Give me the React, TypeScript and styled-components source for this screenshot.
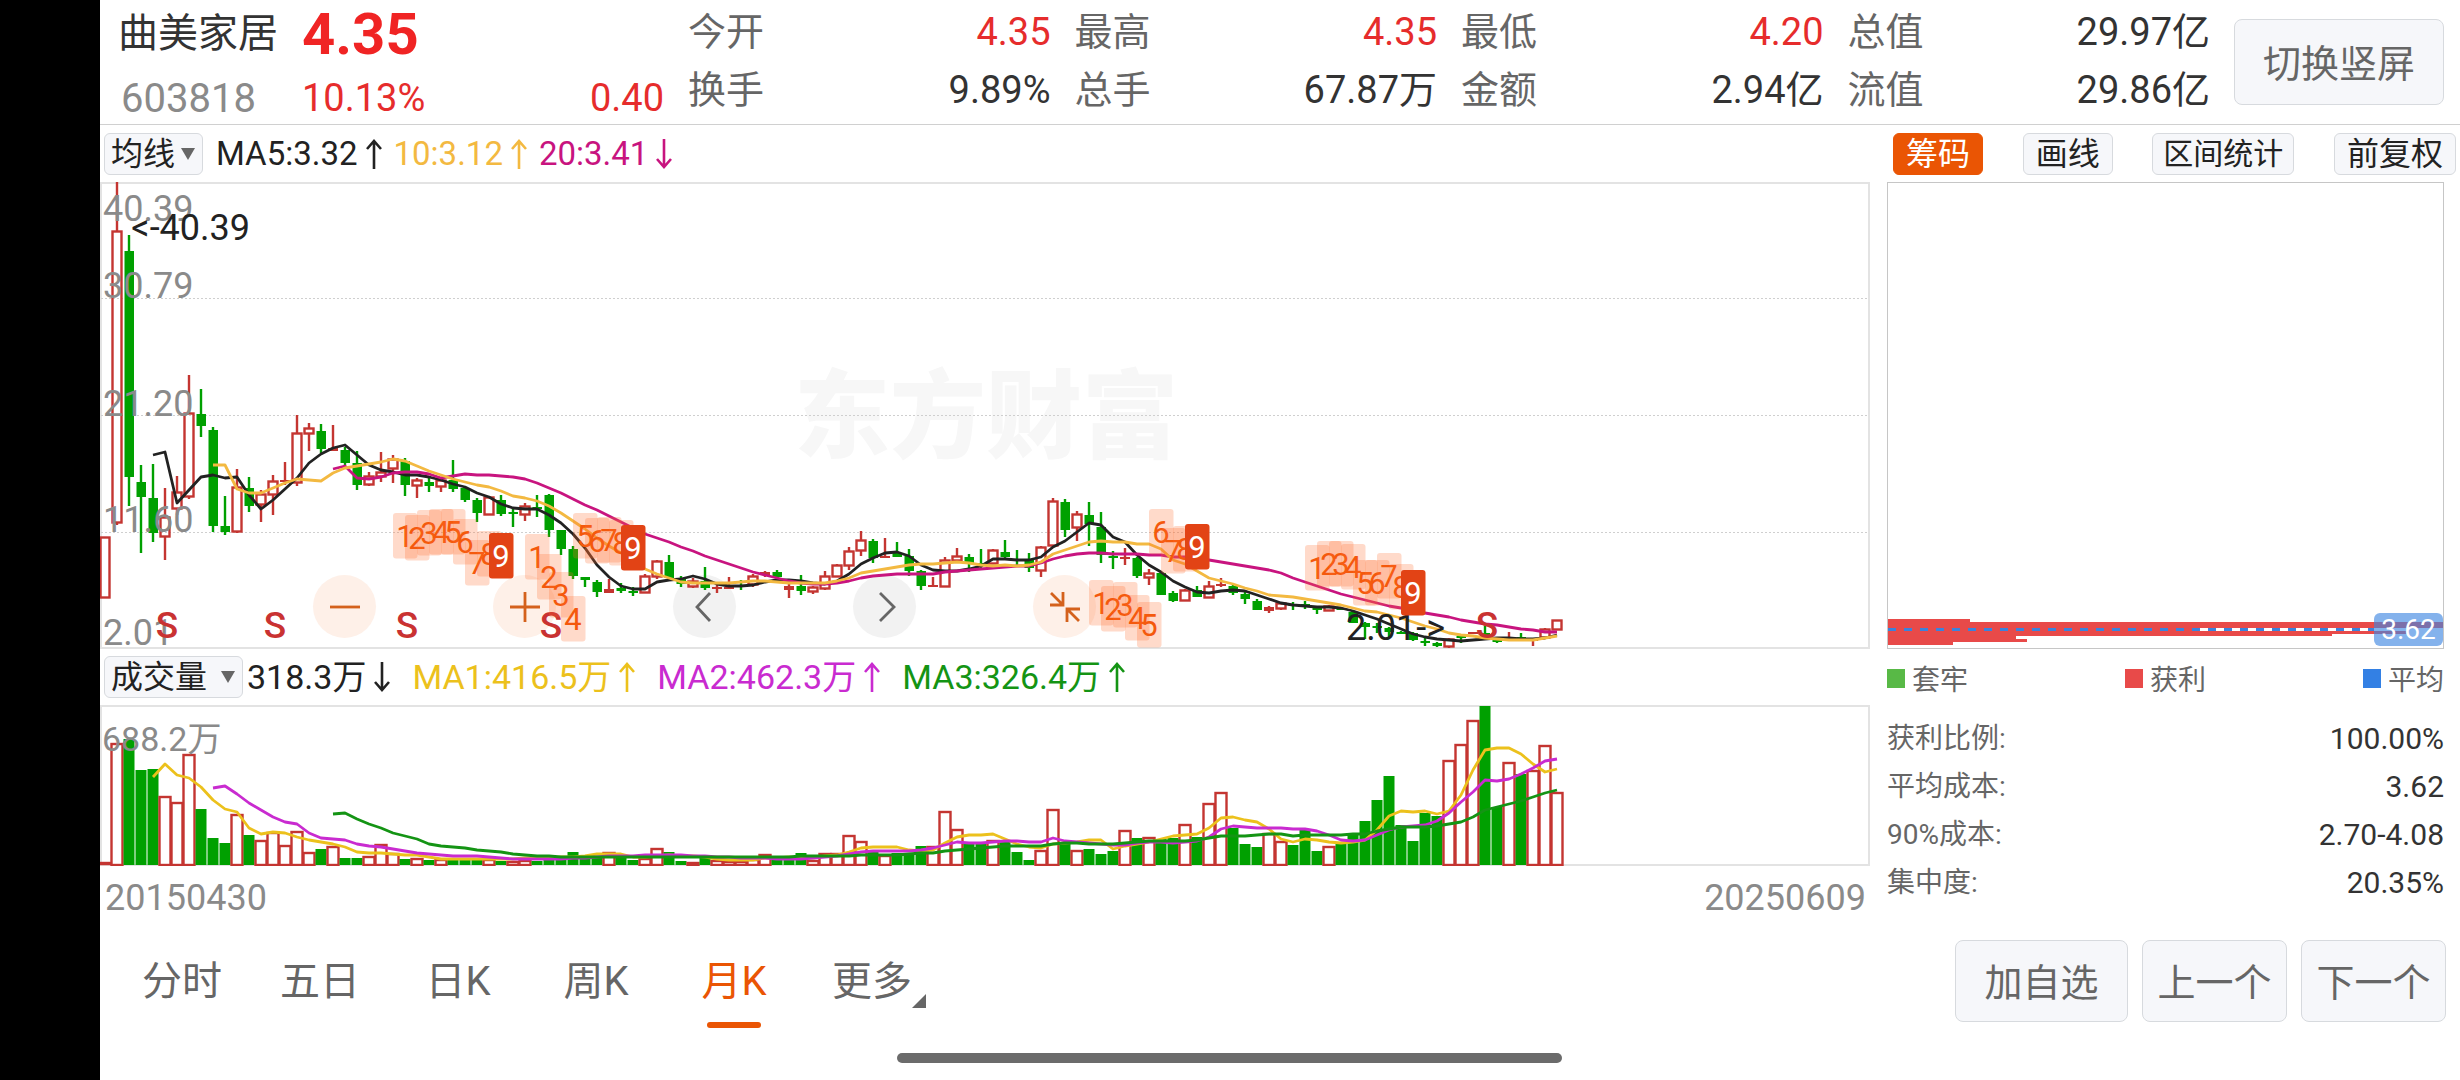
import React, { useState } from 'react';
import styled, { createGlobalStyle, css } from 'styled-components';

const color = {
  ink: '#222222',
  text: '#333333',
  label: '#666666',
  muted: '#8a8a8a',
  up: '#e62c2c',
  candleUp: '#c43531',
  candleDown: '#00a000',
  accent: '#ea5504',
  amber: '#f3b941',
  magenta: '#c8147f',
  purple: '#c92bd0',
  gold: '#ecc11c',
  green: '#149414',
  line: '#e3e3e3',
  chip: '#f6f7fa',
  chipLine: '#d7dade',
  profit: '#e84a49',
};

const GlobalStyle = createGlobalStyle`
  * { box-sizing: border-box; }
  body {
    margin: 0;
    background: #fff;
    color: ${color.text};
    font-family: Roboto, "Noto Sans CJK SC", sans-serif;
  }
  button, select { font: inherit; color: inherit; margin: 0; cursor: pointer; }
`;

/* ---------- series data, in chart canvas units ---------- */

const STEP = 12;
const FIRST = 105;
const xAt = (i: number) => FIRST + i * STEP;

type Candle = { up: boolean; high: number; top: number; bottom: number; low: number };

const candles: Candle[] = `
r537,537,598,598 r182,231,523,525 g235,251,477,506 g465,482,497,553 g464,498,533,542
r488,517,537,560 r476,492,509,515 r375,413,497,499 g389,414,426,437 g427,430,526,532
g496,526,532,535 r469,487,532,533 g477,488,506,512 r490,494,505,522 r475,481,495,515
r462,480,482,485 r415,433,483,486 r423,428,434,451 g424,431,449,453 r425,448,451,451
g447,450,463,465 g451,463,485,490 r472,476,485,486 r452,472,477,482 r455,459,469,483
g458,461,485,496 r478,480,486,498 g477,482,486,492 r478,480,487,492 g460,480,489,492
g487,488,500,502 g498,500,513,522 r497,497,515,515 g495,500,514,516 g507,512,514,527
r503,506,515,521 g495,507,508,517 g494,495,530,537 g530,530,549,555 g546,549,576,579
g577,577,580,587 g580,582,592,597 r579,589,593,593 g583,588,591,593 g587,591,592,596
r574,576,593,593 r560,561,577,579 g555,562,578,579 g576,579,584,587 r578,581,587,588
g567,581,588,590 r583,587,589,593 r577,587,589,589 g580,585,587,590 r574,576,585,587
r571,572,575,577 g570,572,577,579 r584,586,590,598 g575,586,591,595 r586,587,592,594
r571,576,589,590 r564,565,577,577 r547,551,566,570 r531,540,551,556 g539,541,558,563
r538,556,558,558 g542,553,557,557 g549,556,571,576 g570,571,586,590 r577,585,587,587
r557,560,587,587 r548,556,561,561 g554,557,564,572 g549,563,565,568 r549,550,564,564
g540,552,557,559 g550,559,560,565 g553,560,568,572 r546,547,571,577 r498,501,546,547
g499,502,530,537 r511,514,528,541 g502,515,524,546 g512,527,555,563 g551,556,558,569
r548,557,559,565 g557,558,576,578 r569,573,578,585 g572,573,595,595 g591,593,601,602
r589,590,601,601 g586,590,597,597 r581,586,598,598 r578,584,586,587 g585,586,593,595
g592,594,599,604 g599,601,610,610 r606,607,611,613 r603,603,609,610 g602,604,606,610
g601,604,606,609 g607,608,610,614 r605,606,611,611 g607,608,609,610 g611,612,623,623
g622,623,627,639 g623,626,628,633 g627,628,632,637 g631,632,634,634 g632,633,640,641
g638,641,642,646 g642,643,646,647 r638,639,647,648 g634,636,638,643 r632,632,634,634
g626,633,636,637 g639,640,642,643 r632,639,640,640 g633,637,639,640 r639,639,641,646
r628,629,638,638 r620,620,630,630`
  .trim()
  .split(/\s+/)
  .map((entry) => {
    const [high, top, bottom, low] = entry.slice(1).split(',').map(Number);
    return { up: entry[0] === 'r', high, top, bottom, low };
  });

const volumes = `
r864 r743 g739 g770 g769 r796 r802 r754 g809 g838 g843 r814 g835 r840 r832 r845 r831 r852 g849 r846
g858 g858 r856 r844 r853 g859 r858 g860 r859 g859 g859 g859 r859 g861 r861 r860 g861 g860 g859 g852
g858 g858 r852 g858 g860 r858 r848 g852 g861 r862 g858 r860 r861 r861 r859 r854 g858 g860 g853 r860
r853 r853 r835 r841 g850 r855 g853 g853 g846 r846 r811 r829 g843 g843 r840 g842 g852 g860 r850 r809
g842 r850 g849 g854 g851 r830 g838 r837 g839 g838 r824 g837 r803 r792 g828 g844 g847 r833 r841 g845
g829 g851 r846 g844 g835 g821 g800 g776 g825 g841 g813 g816 r760 r744 r720 g706 g807 r762 g774 r770
r745 r792`
  .trim()
  .split(/\s+/)
  .map((entry) => ({ up: entry[0] === 'r', top: Number(entry.slice(1)) }));

type Series = { start: number; stroke: string; values: number[] };

const priceAverages: Series[] = [
  {
    start: 4,
    stroke: '#222222',
    values: [
      455, 452, 503, 490, 477, 475, 478, 477, 495, 509, 500, 489, 478, 463, 454, 448, 445, 455, 465, 470, 472, 475,
      475, 477, 480, 484, 487, 493, 497, 504, 508, 509, 509, 515, 523, 534, 548, 565, 577, 586, 589, 589, 582, 580,
      579, 576, 579, 584, 586, 586, 585, 582, 580, 580, 581, 583, 584, 581, 574, 564, 558, 553, 552, 556, 565, 570,
      571, 571, 569, 566, 559, 559, 560, 560, 557, 547, 541, 532, 523, 525, 537, 542, 555, 565, 572, 581, 587, 592,
      593, 591, 590, 591, 595, 599, 603, 605, 606, 607, 607, 608, 611, 615, 619, 624, 629, 634, 637, 639, 640, 641,
      640, 639, 638, 638, 639, 639, 638, 635,
    ],
  },
  {
    start: 19,
    stroke: '#c8147f',
    values: [
      469, 466, 478, 479, 477, 473, 472, 472, 474, 478, 476, 474, 475, 475, 476, 477, 479, 483, 488, 493, 499, 505,
      510, 516, 522, 528, 534, 538, 542, 547, 551, 556, 560, 564, 568, 572, 575, 578, 581, 583, 584, 584, 583, 581,
      578, 576, 575, 574, 574, 574, 574, 572, 571, 570, 569, 568, 567, 566, 566, 563, 559, 556, 554, 553, 553, 554,
      554, 554, 555, 555, 557, 557, 558, 560, 562, 564, 566, 568, 570, 573, 578, 582, 586, 590, 594, 597, 600, 603,
      606, 608, 610, 613, 615, 617, 620, 622, 624, 625, 627, 629, 630, 632, 632,
    ],
  },
  {
    start: 9,
    stroke: '#f3b941',
    values: [
      465, 465, 489, 493, 493, 488, 483, 479, 480, 481, 473, 468, 466, 464, 462, 459, 461, 466, 471, 475, 479, 482,
      485, 487, 491, 496, 498, 501, 506, 513, 521, 529, 538, 546, 553, 562, 569, 574, 578, 582, 583, 583, 583, 583,
      582, 581, 581, 582, 583, 583, 583, 583, 581, 578, 573, 571, 569, 567, 565, 564, 564, 563, 562, 563, 565, 566,
      565, 566, 565, 562, 554, 550, 546, 542, 541, 542, 542, 544, 544, 549, 560, 564, 571, 578, 581, 584, 588, 591,
      595, 596, 597, 599, 601, 603, 605, 608, 611, 612, 615, 618, 622, 626, 629, 633, 635, 636, 638, 639, 640, 640,
      640, 638, 636,
    ],
  },
];

const volumeAverages: Series[] = [
  {
    start: 4,
    stroke: '#ecc11c',
    values: [
      777, 764, 775, 778, 787, 800, 809, 812, 828, 834, 832, 833, 837, 840, 842, 844, 847, 852, 853, 853, 854, 855,
      855, 857, 859, 859, 859, 859, 859, 859, 859, 858, 858, 858, 857, 857, 856, 854, 854, 854, 857, 857, 856, 855,
      856, 856, 857, 859, 860, 860, 860, 858, 858, 857, 858, 858, 856, 855, 852, 848, 847, 847, 847, 850, 851, 850,
      843, 837, 835, 835, 834, 839, 844, 847, 848, 844, 843, 842, 840, 840, 849, 846, 844, 842, 839, 836, 835, 834,
      828, 818, 817, 820, 822, 829, 839, 842, 839, 840, 842, 843, 842, 840, 830, 816, 811, 812, 811, 814, 811, 795,
      770, 750, 748, 748, 754, 764, 772, 769,
    ],
  },
  {
    start: 9,
    stroke: '#c92bd0',
    values: [
      788, 786, 794, 803, 810, 817, 822, 824, 833, 838, 839, 840, 844, 846, 847, 849, 851, 853, 854, 855, 856, 856,
      856, 857, 858, 859, 859, 859, 859, 859, 858, 858, 857, 856, 856, 856, 855, 855, 855, 855, 856, 856, 857, 857,
      858, 858, 858, 859, 859, 859, 858, 857, 856, 854, 852, 851, 851, 851, 851, 850, 848, 845, 842, 843, 843, 842,
      841, 841, 842, 842, 838, 841, 842, 843, 844, 845, 845, 843, 842, 842, 843, 842, 841, 837, 829, 826, 827, 828,
      828, 828, 829, 829, 831, 835, 840, 841, 840, 835, 830, 827, 826, 825, 821, 813, 802, 792, 780, 781, 779, 774,
      768, 761, 759,
    ],
  },
  {
    start: 19,
    stroke: '#149414',
    values: [
      814, 813, 819, 824, 828, 833, 836, 839, 844, 846, 847, 848, 850, 851, 852, 854, 855, 856, 856, 857, 857, 857,
      857, 857, 857, 857, 857, 857, 857, 857, 857, 857, 857, 857, 857, 857, 857, 857, 857, 856, 856, 856, 856, 856,
      855, 855, 855, 855, 854, 853, 853, 851, 850, 849, 848, 847, 846, 846, 846, 846, 844, 843, 843, 844, 844, 844,
      843, 842, 841, 841, 841, 841, 840, 838, 836, 836, 836, 835, 834, 834, 836, 835, 835, 835, 835, 834, 834, 831,
      829, 827, 827, 827, 826, 824, 822, 817, 810, 807, 804, 801, 797, 793, 790,
    ],
  },
];

const toPoints = (s: Series) => s.values.map((v, k) => `${xAt(s.start + k)},${v}`).join(' ');

/* Sequential count runs: index of the first candle and the tag tops. */
const runs: { start: number; first: number; tops: number[] }[] = [
  { start: 25, first: 1, tops: [513, 515, 510, 509, 509, 519, 540, 531, 533] },
  { start: 36, first: 1, tops: [534, 554, 572, 596, 513, 518, 517, 520, 525] },
  { start: 83, first: 1, tops: [580, 586, 582, 595, 602, 509, 528, 526, 524] },
  { start: 101, first: 1, tops: [545, 541, 541, 544, 560, 560, 553, 564, 570] },
];

const sellMarks = [167, 275, 407, 551, 1487];

/* ---------- shell ---------- */

const Page = styled.div`
  position: relative;
  display: flex;
  min-height: 100vh;
  background: #fff;
`;

const CameraStrip = styled.div`
  flex: 0 0 100px;
  background: #000;
`;

const Screen = styled.main`
  flex: 1;
  min-width: 0;
  display: flex;
  flex-direction: column;
`;

const HomeIndicator = styled.div`
  position: absolute;
  left: 50%;
  bottom: 17px;
  width: 665px;
  height: 10px;
  margin-left: -333px;
  border-radius: 5px;
  background: #6b6b6b;
`;

const softButton = css`
  border: 1px solid ${color.chipLine};
  background: ${color.chip};
  padding: 0;
`;

/* ---------- quote header ---------- */

const Header = styled.header`
  display: flex;
  gap: 24px;
  height: 125px;
  padding: 3px 16px 0 18px;
  border-bottom: 1px solid #d0d0d0;
`;

const Identity = styled.div`
  flex: 0 0 546px;
  display: grid;
  grid-template-columns: 184px 1fr auto;
  grid-template-rows: 62px 66px;
  align-items: center;
  white-space: nowrap;
`;

const StockName = styled.h1`
  margin: 0;
  font-size: 40px;
  font-weight: 400;
  line-height: 60px;
`;

const Price = styled.strong`
  grid-column: span 2;
  color: #f02424;
  font-size: 58px;
  font-weight: 700;
  line-height: 60px;
`;

const StockCode = styled.span`
  padding-left: 3px;
  color: ${color.muted};
  font-size: 40px;
`;

const Change = styled.span`
  color: ${color.up};
  font-size: 38px;
`;

const Quotes = styled.dl`
  flex: 1;
  display: grid;
  grid-template-columns: repeat(4, 1fr);
  grid-template-rows: 58px 58px;
  column-gap: 24px;
  margin: 0;
`;

const Quote = styled.div`
  display: flex;
  justify-content: space-between;
  align-items: center;
  white-space: nowrap;
  line-height: 58px;
`;

const QuoteLabel = styled.dt`
  color: ${color.label};
  font-size: 38px;
`;

const QuoteValue = styled.dd<{ $up?: boolean }>`
  margin: 0;
  color: ${(p) => (p.$up ? color.up : color.text)};
  font-size: 38px;
`;

const RotateButton = styled.button`
  ${softButton}
  flex: 0 0 210px;
  height: 86px;
  margin-top: 16px;
  padding-bottom: 4px;
  border-radius: 8px;
  color: ${color.label};
  font-size: 38px;
`;

/* ---------- body ---------- */

const Body = styled.div`
  display: grid;
  grid-template-columns: minmax(0, 1fr) 573px;
  column-gap: 17px;
`;

const Column = styled.section`
  min-width: 0;
  display: flex;
  flex-direction: column;
`;

const Legend = styled.div<{ $volume?: boolean }>`
  display: flex;
  align-items: center;
  gap: ${(p) => (p.$volume ? 22 : 12)}px;
  height: ${(p) => (p.$volume ? 56 : 57)}px;
  padding-left: 4px;
  font-size: ${(p) => (p.$volume ? 34 : 33)}px;
  line-height: 40px;
  white-space: nowrap;
`;

const Picker = styled.label<{ $width: number }>`
  position: relative;
  display: block;
  width: ${(p) => p.$width}px;
  margin-right: ${(p) => (p.$width > 100 ? -18 : 1)}px;
`;

const PickerSelect = styled.select`
  ${softButton}
  appearance: none;
  display: block;
  width: 100%;
  height: 42px;
  padding: 0 0 0 6px;
  border-radius: 6px;
  color: ${color.ink};
  font-size: 32px;
  line-height: 40px;
`;

const PickerArrow = styled.svg`
  position: absolute;
  right: 8px;
  top: 15px;
  width: 14px;
  height: 12px;
  pointer-events: none;
`;

const Indicator = styled.span<{ $color: string }>`
  display: inline-flex;
  align-items: center;
  gap: 8px;
  color: ${(p) => p.$color};
`;

const ArrowIcon = styled.svg<{ $down?: boolean }>`
  width: 16px;
  height: 30px;
  fill: none;
  stroke: currentColor;
  stroke-width: 2.6;
  rotate: ${(p) => (p.$down ? '180deg' : '0deg')};
`;

const ChartFrame = styled.div<{ $height: number }>`
  position: relative;
  height: ${(p) => p.$height}px;
  box-shadow: inset 0 0 0 2px ${color.line};
`;

const Canvas = styled.svg`
  position: relative;
  display: block;
  width: 100%;
  height: 100%;
  pointer-events: none;

  .axis { fill: ${color.muted}; font-size: 36px; }
  .volume-axis { fill: ${color.muted}; font-size: 34px; }
  .mark { fill: ${color.ink}; font-size: 36px; }
  .sell { fill: #c93232; font-size: 37px; font-weight: 500; text-anchor: middle; }
  .count { font-size: 31px; text-anchor: middle; }
  .brand { fill: #f7f7f7; font-size: 96px; font-weight: 900; font-family: "Noto Sans CJK SC", sans-serif; }
  .grid { stroke: #cfcfcf; stroke-width: 1; stroke-dasharray: 2 2; }
  .average { fill: none; stroke-width: 2.8; stroke-linejoin: round; }
`;

const ChartTools = styled.div`
  position: absolute;
  left: 213px;
  bottom: 11px;
  display: flex;
  gap: 117px;
`;

const RoundButton = styled.button<{ $neutral?: boolean }>`
  display: grid;
  place-items: center;
  width: 63px;
  height: 63px;
  padding: 0;
  border: 0;
  border-radius: 50%;
  background: ${(p) => (p.$neutral ? '#f2f2f2' : '#fef0e8')};
  color: ${(p) => (p.$neutral ? '#666666' : '#d4611c')};

  svg { width: 32px; height: 32px; fill: none; stroke: currentColor; stroke-width: 2.8; }
`;

const DateRow = styled.div`
  display: flex;
  justify-content: space-between;
  padding: 0 4px 0 5px;
  color: ${color.muted};
  font-size: 36px;
  line-height: 64px;
`;

/* ---------- cost distribution panel ---------- */

const ChipRow = styled.div`
  display: flex;
  align-items: center;
  justify-content: space-between;
  height: 57px;
  padding: 0 4px 0 6px;
`;

const Chip = styled.button<{ $active?: boolean; $tight?: boolean }>`
  ${softButton}
  height: 42px;
  padding: 0 ${(p) => (p.$tight ? 10 : 12)}px;
  border-radius: 6px;
  color: ${color.ink};
  font-size: ${(p) => (p.$tight ? 30 : 32)}px;
  line-height: 40px;
  white-space: nowrap;
  ${(p) => p.$active && css`
    border-color: ${color.accent};
    background: ${color.accent};
    color: #fff;
  `}
`;

const CostFrame = styled.div`
  position: relative;
  height: 467px;
  margin-right: 16px;
  border: 1px solid #c6c6c6;
`;

const CostCanvas = styled.svg`
  display: block;
  width: 100%;
  height: 100%;
`;

const CostBadge = styled.span`
  position: absolute;
  right: 0;
  bottom: 2px;
  width: 69px;
  border-radius: 6px;
  background: rgba(62, 134, 226, 0.64);
  color: #fff;
  font-size: 28px;
  line-height: 33px;
  text-align: center;
`;

const CostKey = styled.ul`
  display: flex;
  align-items: center;
  justify-content: space-between;
  height: 58px;
  margin: 0 16px 0 0;
  padding: 0;
  list-style: none;
  color: ${color.label};
  font-size: 28px;
`;

const KeyItem = styled.li<{ $color: string }>`
  display: flex;
  align-items: center;
  gap: 7px;

  &::before {
    content: '';
    width: 18px;
    height: 19px;
    background: ${(p) => p.$color};
  }
`;

const Stats = styled.dl`
  margin: 8px 16px 0 0;
`;

const Stat = styled.div`
  display: flex;
  justify-content: space-between;
  font-size: 28px;
  line-height: 48px;

  dt { color: ${color.label}; }
  dd { margin: 0; font-size: 30px; }
`;

/* ---------- footer ---------- */

const Footer = styled.footer`
  display: flex;
  justify-content: space-between;
  padding: 0 14px;
`;

const Tabs = styled.nav`
  display: flex;
`;

const Tab = styled.button<{ $active: boolean }>`
  position: relative;
  width: 138px;
  height: 102px;
  padding: 0 2px 6px 0;
  border: 0;
  background: none;
  color: ${(p) => (p.$active ? color.accent : color.label)};
  font-size: 40px;
  ${(p) => p.$active && css`
    &::after {
      content: '';
      position: absolute;
      left: 41px;
      bottom: 4px;
      width: 54px;
      height: 6px;
      border-radius: 3px;
      background: ${color.accent};
    }
  `}
`;

const MoreCorner = styled.svg`
  position: absolute;
  right: 16px;
  bottom: 24px;
  width: 14px;
  height: 14px;
  fill: ${color.label};
`;

const Actions = styled.div`
  display: flex;
  gap: 14px;
  padding-top: 10px;
`;

const ActionButton = styled.button<{ $wide?: boolean }>`
  ${softButton}
  width: ${(p) => (p.$wide ? 173 : 145)}px;
  height: 82px;
  padding-bottom: 4px;
  border-radius: 8px;
  color: ${color.label};
  font-size: 38px;
`;

/* ---------- pieces ---------- */

const Arrow = ({ down }: { down?: boolean }) => (
  <ArrowIcon $down={down} viewBox="0 0 16 30" aria-hidden="true">
    <path d="M8 30V2M1 10L8 2l7 8" />
  </ArrowIcon>
);

const Dropdown = ({ label, width, options }: { label: string; width: number; options: string[] }) => (
  <Picker $width={width}>
    <PickerSelect aria-label={label}>
      {options.map((o) => (
        <option key={o}>{o}</option>
      ))}
    </PickerSelect>
    <PickerArrow viewBox="0 0 14 12" aria-hidden="true">
      <path d="M0 0h14L7 12z" fill="#666" />
    </PickerArrow>
  </Picker>
);

const Averages = ({ series }: { series: Series[] }) => (
  <>
    {series.map((s) => (
      <polyline key={s.stroke} className="average" stroke={s.stroke} points={toPoints(s)} />
    ))}
  </>
);

const CandleShape = ({ candle, x }: { candle: Candle; x: number }) => {
  const { up, high, top, bottom, low } = candle;
  const height = Math.max(bottom - top, 2);
  if (!up) {
    return (
      <g fill={color.candleDown}>
        <rect x={x - 1.2} y={high} width={2.4} height={low - high} />
        <rect x={x - 4.5} y={top} width={9.5} height={height} />
      </g>
    );
  }
  return (
    <g fill={color.candleUp}>
      <rect x={x - 1.2} y={high} width={2.4} height={Math.max(top - high, 0)} />
      <rect x={x - 1.2} y={bottom} width={2.4} height={Math.max(low - bottom, 0)} />
      {height < 5 ? (
        <rect x={x - 5} y={top} width={10} height={height} />
      ) : (
        <rect x={x - 4.5} y={top + 0.5} width={9} height={height - 1} fill="none" stroke={color.candleUp} strokeWidth={2.4} />
      )}
    </g>
  );
};

const CountTags = () => (
  <>
    {runs.flatMap((run) =>
      run.tops.map((top, k) => {
        const x = xAt(run.start + k);
        const n = run.first + k;
        const last = n === 9;
        return (
          <g key={`${run.start}-${k}`}>
            <rect
              x={x - 12}
              y={top}
              width={24.5}
              height={45.5}
              rx={3}
              fill={last ? '#e24315' : '#ff6a2a'}
              fillOpacity={last ? 1 : 0.25}
            />
            <text className="count" x={x} y={top + 34} fill={last ? '#fff' : '#f4590c'}>
              {n}
            </text>
          </g>
        );
      }),
    )}
  </>
);

const PriceChart = () => (
  <ChartFrame $height={467}>
    <ChartTools>
      <RoundButton aria-label="缩小">
        <svg viewBox="0 0 32 32"><path d="M1 16h30" /></svg>
      </RoundButton>
      <RoundButton aria-label="放大">
        <svg viewBox="0 0 32 32"><path d="M1 16h30M16 1v30" /></svg>
      </RoundButton>
      <RoundButton $neutral aria-label="左移">
        <svg viewBox="0 0 32 32"><path d="M21 2L8 16l13 14" /></svg>
      </RoundButton>
      <RoundButton $neutral aria-label="右移">
        <svg viewBox="0 0 32 32"><path d="M11 2l14 14-14 14" /></svg>
      </RoundButton>
      <RoundButton aria-label="收起">
        <svg viewBox="0 0 32 32">
          <path d="M1 14h13V1M2 2l12 12M18 31V18h13M18 18l12 12" />
        </svg>
      </RoundButton>
    </ChartTools>
    <Canvas viewBox="100 182 1770 467" preserveAspectRatio="xMinYMid meet">
      <text className="brand" x={794} y={450}>东方财富</text>
      {[298.5, 415.5, 532.5].map((y) => (
        <line key={y} className="grid" x1={101} x2={1868} y1={y} y2={y} />
      ))}
      {candles.map((c, i) => (
        <CandleShape key={i} candle={c} x={xAt(i)} />
      ))}
      <Averages series={priceAverages} />
      <text className="axis" x={103} y={221}>40.39</text>
      <text className="axis" x={103} y={298}>30.79</text>
      <text className="axis" x={103} y={416}>21.20</text>
      <text className="axis" x={103} y={532}>11.60</text>
      <text className="axis" x={103} y={645}>2.01</text>
      <text className="mark" x={250} y={240} textAnchor="end">&lt;-40.39</text>
      <text className="mark" x={1346} y={640}>2.01-&gt;</text>
      {sellMarks.map((x) => (
        <text key={x} className="sell" x={x} y={638}>S</text>
      ))}
      <CountTags />
    </Canvas>
  </ChartFrame>
);

const VolumeChart = () => (
  <ChartFrame $height={161}>
    <Canvas viewBox="100 705 1770 161" preserveAspectRatio="xMinYMid meet">
      {volumes.map((v, i) =>
        v.up ? (
          <rect
            key={i}
            x={xAt(i) - 5.5}
            y={Math.min(v.top + 1, 863)}
            width={11}
            height={Math.max(864 - v.top, 1)}
            fill="#fff"
            stroke={color.candleUp}
            strokeWidth={2.4}
          />
        ) : (
          <rect key={i} x={xAt(i) - 5.5} y={v.top} width={11} height={865 - v.top} fill={color.candleDown} />
        ),
      )}
      <Averages series={volumeAverages} />
      <text className="volume-axis" x={102} y={751}>688.2万</text>
    </Canvas>
  </ChartFrame>
);

const CostChart = () => (
  <CostFrame>
    <CostCanvas viewBox="0 0 555 465" preserveAspectRatio="none" aria-hidden="true">
      <g fill={color.profit}>
        <rect x={0} y={436} width={82} height={4} />
        <rect x={0} y={439} width={555} height={6} />
        <rect x={0} y={445} width={312} height={3} />
        <rect x={0} y={448} width={518} height={3} />
        <rect x={0} y={451} width={444} height={2} />
        <rect x={0} y={453} width={128} height={3} />
        <rect x={0} y={456} width={139} height={3} />
        <rect x={0} y={459} width={65} height={3} />
      </g>
      <line x1={0} x2={486} y1={446.5} y2={446.5} stroke="#3b82dc" strokeWidth={3} strokeDasharray="8 8" />
    </CostCanvas>
    <CostBadge>3.62</CostBadge>
  </CostFrame>
);

const quotes: [string, string, boolean?][] = [
  ['今开', '4.35', true],
  ['最高', '4.35', true],
  ['最低', '4.20', true],
  ['总值', '29.97亿'],
  ['换手', '9.89%'],
  ['总手', '67.87万'],
  ['金额', '2.94亿'],
  ['流值', '29.86亿'],
];

const stats: [string, string][] = [
  ['获利比例:', '100.00%'],
  ['平均成本:', '3.62'],
  ['90%成本:', '2.70-4.08'],
  ['集中度:', '20.35%'],
];

const periods = ['分时', '五日', '日K', '周K', '月K', '更多'];

export default function App() {
  const [period, setPeriod] = useState('月K');

  return (
    <Page>
      <GlobalStyle />
      <CameraStrip />
      <Screen>
        <Header>
          <Identity>
            <StockName>曲美家居</StockName>
            <Price>4.35</Price>
            <StockCode>603818</StockCode>
            <Change>10.13%</Change>
            <Change>0.40</Change>
          </Identity>
          <Quotes>
            {quotes.map(([label, value, up]) => (
              <Quote key={label}>
                <QuoteLabel>{label}</QuoteLabel>
                <QuoteValue $up={up}>{value}</QuoteValue>
              </Quote>
            ))}
          </Quotes>
          <RotateButton>切换竖屏</RotateButton>
        </Header>

        <Body>
          <Column>
            <Legend>
              <Dropdown label="主图指标" width={99} options={['均线', 'BOLL']} />
              <Indicator $color={color.ink}>MA5:3.32<Arrow /></Indicator>
              <Indicator $color={color.amber}>10:3.12<Arrow /></Indicator>
              <Indicator $color={color.magenta}>20:3.41<Arrow down /></Indicator>
            </Legend>
            <PriceChart />
            <Legend $volume>
              <Dropdown label="副图指标" width={139} options={['成交量', 'MACD']} />
              <Indicator $color={color.ink}>318.3万<Arrow down /></Indicator>
              <Indicator $color={color.gold}>MA1:416.5万<Arrow /></Indicator>
              <Indicator $color={color.purple}>MA2:462.3万<Arrow /></Indicator>
              <Indicator $color={color.green}>MA3:326.4万<Arrow /></Indicator>
            </Legend>
            <VolumeChart />
            <DateRow>
              <time>20150430</time>
              <time>20250609</time>
            </DateRow>
          </Column>

          <Column>
            <ChipRow>
              <Chip $active>筹码</Chip>
              <Chip>画线</Chip>
              <Chip $tight>区间统计</Chip>
              <Chip>前复权</Chip>
            </ChipRow>
            <CostChart />
            <CostKey>
              <KeyItem $color="#58b946">套牢</KeyItem>
              <KeyItem $color={color.profit}>获利</KeyItem>
              <KeyItem $color="#3380e4">平均</KeyItem>
            </CostKey>
            <Stats>
              {stats.map(([label, value]) => (
                <Stat key={label}>
                  <dt>{label}</dt>
                  <dd>{value}</dd>
                </Stat>
              ))}
            </Stats>
          </Column>
        </Body>

        <Footer>
          <Tabs>
            {periods.map((p) => (
              <Tab key={p} $active={p === period} onClick={() => setPeriod(p)}>
                {p}
                {p === '更多' && (
                  <MoreCorner viewBox="0 0 14 14" aria-hidden="true">
                    <path d="M14 0v14H0z" />
                  </MoreCorner>
                )}
              </Tab>
            ))}
          </Tabs>
          <Actions>
            <ActionButton $wide>加自选</ActionButton>
            <ActionButton>上一个</ActionButton>
            <ActionButton>下一个</ActionButton>
          </Actions>
        </Footer>
      </Screen>
      <HomeIndicator />
    </Page>
  );
}
